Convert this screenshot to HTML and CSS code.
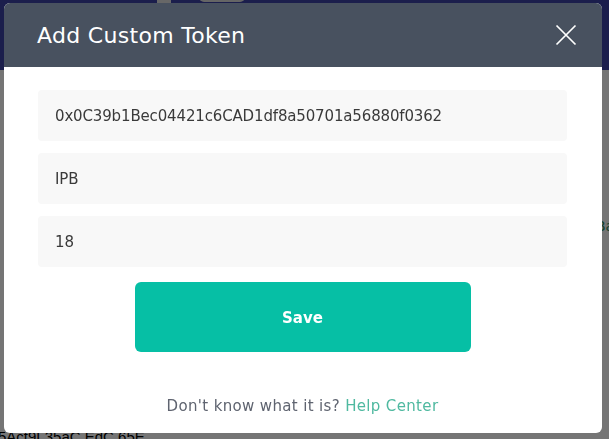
FILE: index.html
```html
<!DOCTYPE html>
<html>
<head>
<meta charset="utf-8">
<link rel="stylesheet" href="styles.css">
</head>
<body>
<div class="page">
  <div class="topbar">
    <span class="tab"></span>
    <span class="pill"></span>
  </div>
  <div class="content">
    <div class="side-link">Ba</div>
    <div class="addr">5Act9L35aC EdC 65E</div>
  </div>
</div>
<div class="overlay"></div>
<div class="modal">
  <div class="modal-header">
    <h2 class="modal-title">Add Custom Token</h2>
    <svg class="close" width="22" height="22" viewBox="0 0 22 22"><path d="M1.5 1.5 L20.5 20.5 M20.5 1.5 L1.5 20.5" stroke="#fff" stroke-width="1.7" fill="none"/></svg>
  </div>
  <div class="modal-body">
    <div class="field">0x0C39b1Bec04421c6CAD1df8a50701a56880f0362</div>
    <div class="field">IPB</div>
    <div class="field">18</div>
    <button class="save">Save</button>
    <p class="help">Don't know what it is? <a class="help-link">Help Center</a></p>
  </div>
</div>
</body>
</html>
```
FILE: styles.css
```css
html, body {
  margin: 0;
  padding: 0;
  width: 609px;
  height: 439px;
  overflow: hidden;
  font-family: "DejaVu Sans", sans-serif;
}
.page {
  height: 439px;
  background: #ffffff;
}
.topbar {
  height: 70px;
  background: #3b42a6;
  position: relative;
}
.tab {
  position: absolute;
  left: 157px;
  top: 0;
  width: 14px;
  height: 4px;
  background: #e0e0e0;
}
.pill {
  position: absolute;
  left: 199px;
  top: -8px;
  width: 46px;
  height: 10px;
  border-radius: 5px;
  background: #dcdcdc;
}
.content {
  position: relative;
  height: 369px;
}
.side-link {
  position: absolute;
  left: 596px;
  top: 148px;
  font-size: 14px;
  color: #2a8a5c;
}
.addr {
  position: absolute;
  left: -2px;
  top: 358px;
  font-family: "Liberation Sans", sans-serif;
  font-size: 15px;
  color: #000;
}
.overlay {
  position: fixed;
  inset: 0;
  background: rgba(0, 0, 0, 0.54);
}
.modal {
  position: fixed;
  left: 4px;
  top: 3px;
  width: 598px;
  height: 430px;
  background: #fff;
  border-radius: 6px;
  overflow: hidden;
  display: flex;
  flex-direction: column;
}
.modal-header {
  height: 64px;
  background: #48515f;
  display: flex;
  align-items: center;
  justify-content: space-between;
  padding: 0 25px 0 33px;
  flex-shrink: 0;
}
.modal-title {
  margin: 0;
  font-size: 22px;
  font-weight: normal;
  color: #fff;
  letter-spacing: 0.3px;
  padding-top: 1px;
}
.close {
  display: block;
}
.modal-body {
  padding: 23px 35px 0 34px;
  display: flex;
  flex-direction: column;
  align-items: center;
}
.field {
  align-self: stretch;
  height: 51px;
  box-sizing: border-box;
  background: #f8f8f8;
  border-radius: 4px;
  margin-bottom: 12px;
  padding: 1px 17px 0;
  display: flex;
  align-items: center;
  font-size: 15px;
  color: #3a3a3a;
  letter-spacing: -0.15px;
}
.save {
  margin-top: 3px;
  width: 336px;
  height: 70px;
  border: none;
  border-radius: 6px;
  background: #06bfa5;
  color: #fff;
  font-family: "DejaVu Sans", sans-serif;
  font-size: 15px;
  font-weight: bold;
  padding-top: 2px;
}
.help {
  margin: 45px 0 0;
  font-size: 15px;
  color: #5f6470;
  letter-spacing: 0.35px;
}
.help-link {
  color: #4fb9a0;
}
```
